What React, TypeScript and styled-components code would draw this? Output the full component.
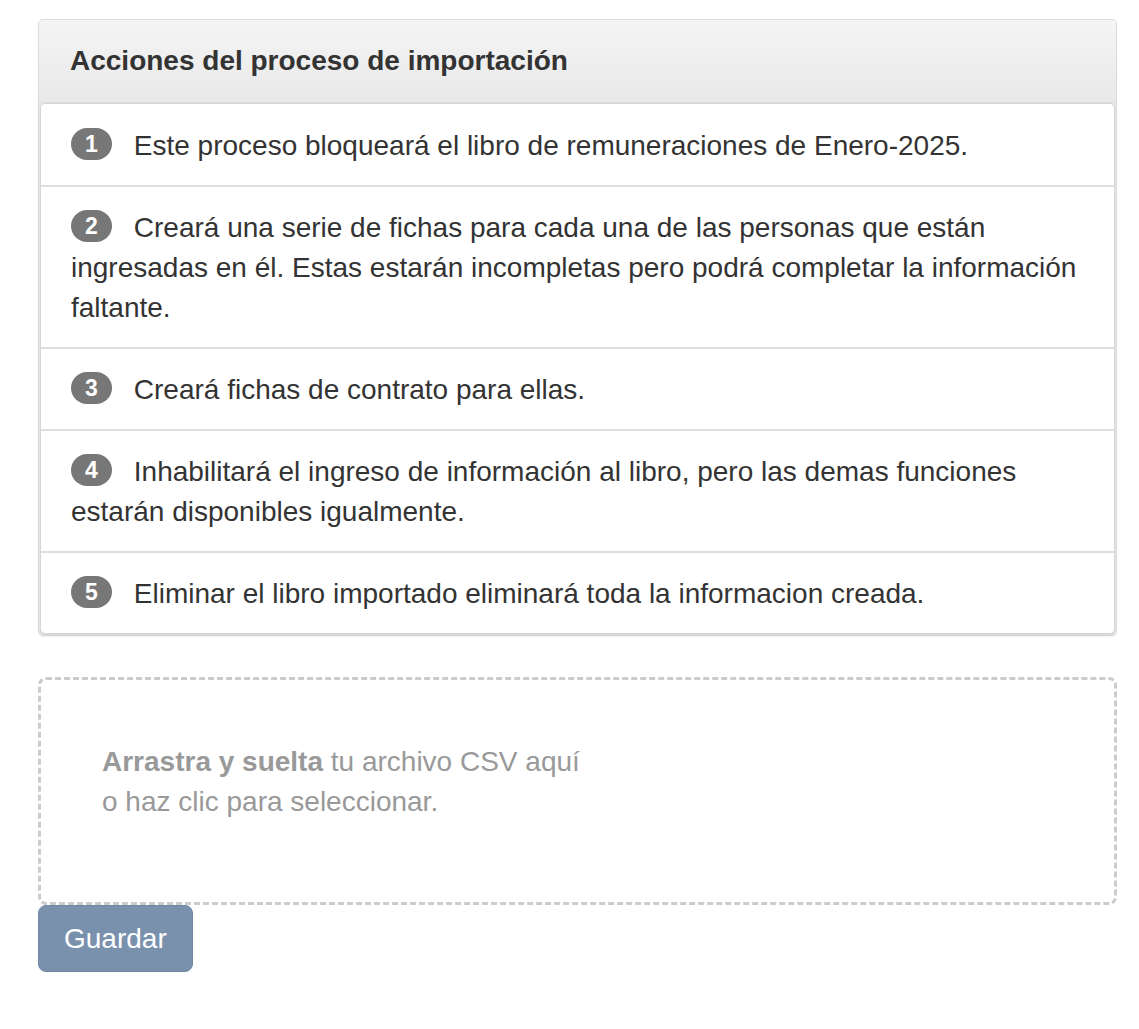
import React from "react";
import styled, { createGlobalStyle } from "styled-components";

const Global = createGlobalStyle`
  html, body { margin: 0; padding: 0; background: #fff; }
  body { font-family: "Liberation Sans", Arial, sans-serif; color: #333; }
  * { box-sizing: border-box; }
`;

const Page = styled.div`
  padding: 19px 22px 40px 38px;
  width: 1139px;
`;

const Panel = styled.section`
  border: 1px solid #dcdcdc;
  border-radius: 5px;
  background: #ececec;
  box-shadow: 0 1px 2px rgba(0, 0, 0, 0.06);
  margin-bottom: 41px;
`;

const PanelHeading = styled.div`
  background: linear-gradient(to bottom, #f5f5f5 0%, #e8e8e8 100%);
  border-bottom: 1px solid #dedede;
  border-radius: 4px 4px 0 0;
  padding: 24px 31px;
`;

const Title = styled.h3`
  margin: 0;
  font-size: 28px;
  line-height: 34px;
  font-weight: bold;
  color: #333;
`;

const ListGroup = styled.ul`
  list-style: none;
  margin: 0 1px 1px 1px;
  padding: 1px 0 0 0;
  background: #fff;
  border: 1px solid #d6d6d6;
  border-radius: 5px;
  box-shadow: 0 1px 2px rgba(0, 0, 0, 0.12);
`;

const Item = styled.li`
  padding: 21px 30px 19px 30px;
  font-size: 28px;
  line-height: 40px;
  color: #333;
  & + & {
    border-top: 2px solid #dedede;
  }
`;

const Badge = styled.span`
  display: inline-block;
  min-width: 41px;
  height: 32px;
  padding: 0 12px;
  margin-right: 14px;
  border-radius: 16px;
  background: #777;
  color: #fff;
  font-size: 23px;
  font-weight: bold;
  line-height: 32px;
  text-align: center;
  vertical-align: 3px;
`;

const Dropzone = styled.div`
  height: 228px;
  border: 3px dashed #cccccc;
  border-radius: 8px;
  padding: 62px 61px;
  font-size: 28px;
  line-height: 40px;
  color: #999;
  cursor: pointer;
`;

const Strong = styled.strong`
  font-weight: bold;
  color: #999;
`;

const Button = styled.button`
  display: inline-block;
  font-family: "Liberation Sans", Arial, sans-serif;
  font-size: 28px;
  line-height: 41px;
  padding: 12px 25px;
  color: #fff;
  background: #7a91ad;
  border: 1px solid #7089a6;
  border-radius: 8px;
  cursor: pointer;
`;

const steps = [
  "Este proceso bloqueará el libro de remuneraciones de Enero-2025.",
  "Creará una serie de fichas para cada una de las personas que están ingresadas en él. Estas estarán incompletas pero podrá completar la información faltante.",
  "Creará fichas de contrato para ellas.",
  "Inhabilitará el ingreso de información al libro, pero las demas funciones estarán disponibles igualmente.",
  "Eliminar el libro importado eliminará toda la informacion creada.",
];

export default function App() {
  return (
    <>
      <Global />
      <Page>
        <Panel>
          <PanelHeading>
            <Title>Acciones del proceso de importación</Title>
          </PanelHeading>
          <ListGroup>
            {steps.map((s, i) => (
              <Item key={i}>
                <Badge>{i + 1}</Badge> {s}
              </Item>
            ))}
          </ListGroup>
        </Panel>
        <Dropzone>
          <Strong>Arrastra y suelta</Strong> tu archivo CSV aquí
          <br />o haz clic para seleccionar.
        </Dropzone>
        <Button>Guardar</Button>
      </Page>
    </>
  );
}
